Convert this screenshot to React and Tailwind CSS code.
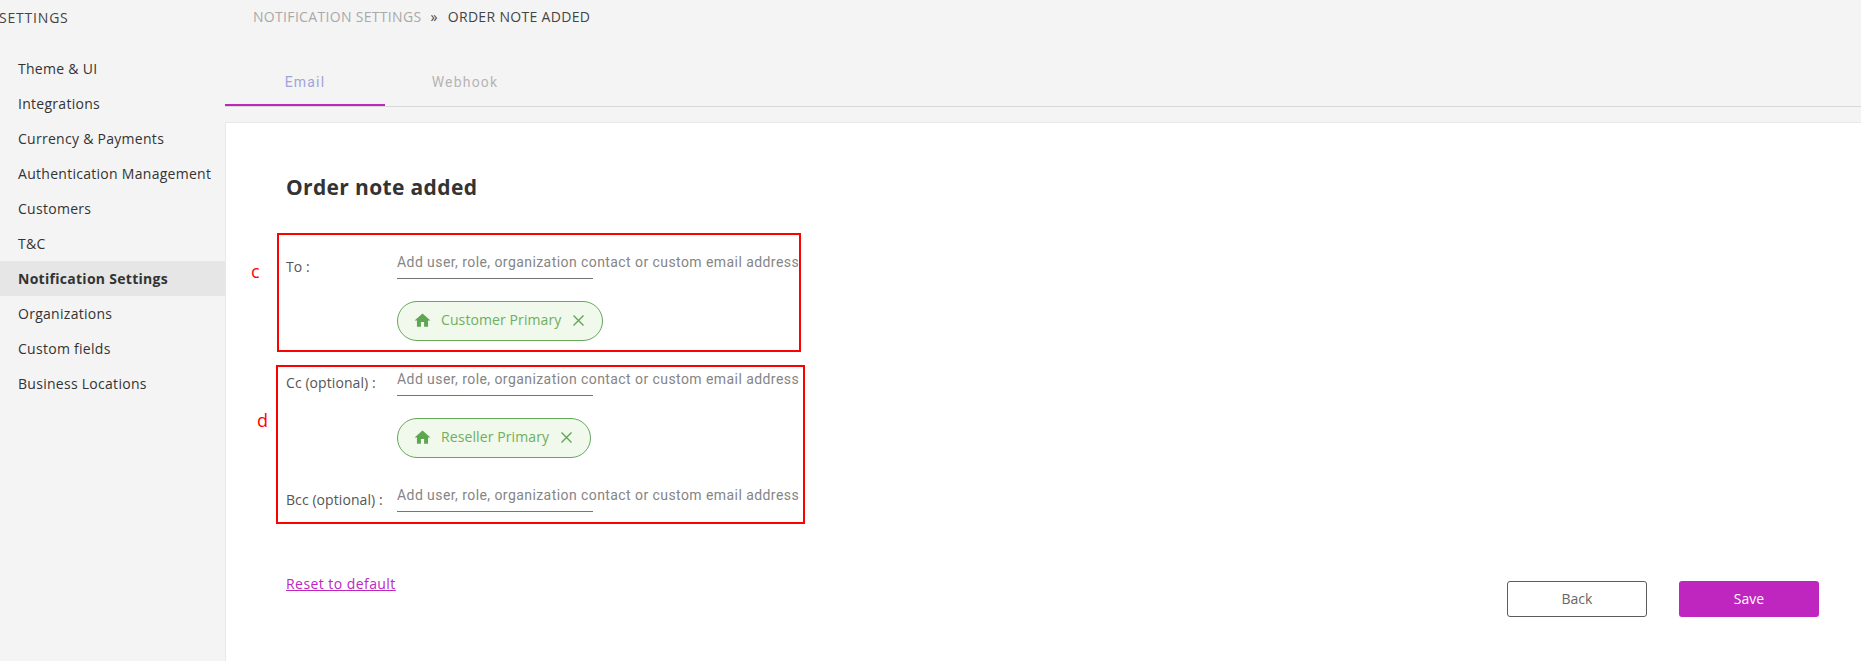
import React from "react";
import { MdHome } from "react-icons/md";

const nav = ["Theme & UI","Integrations","Currency & Payments","Authentication Management","Customers","T&C","Notification Settings","Organizations","Custom fields","Business Locations"];
const sans = "font-['Open_Sans','Noto_Sans',sans-serif]";

function Chip({ label }) {
  return (
    <div className={`mt-[22px] ml-[111px] flex h-10 w-fit items-center rounded-[20px] border border-[#66a85a] bg-[#f1f8ec] pr-[17px] pb-[2px] pl-[15px] text-[14px] text-[#6cb060] ${sans}`}>
      <MdHome className="h-[19px] w-[19px] text-[#5fa653]" />
      <span className="ml-[9px] -translate-y-[1px] whitespace-nowrap tracking-[0.1px]">{label}</span>
      <svg className="ml-[11px] h-[13px] w-[13px] text-[#5fa653]" viewBox="0 0 13 13" fill="none" stroke="currentColor" strokeWidth="1.4"><path d="M1.5 1.5l10 10M11.5 1.5l-10 10" /></svg>
    </div>
  );
}

function Field({ label, mt = "mt-0", pt = "pt-[8px]" }) {
  return (
    <div className={`flex ${mt}`}>
      <div className={`w-[111px] shrink-0 ${pt} text-[14px] leading-[20px] tracking-[0.08px] text-[#555] ${sans}`}>{label}</div>
      <div className="h-[30px] w-[196px] border-b border-[#757575]">
        <span className="block whitespace-nowrap font-['Roboto',sans-serif] text-[14px] leading-[26px] tracking-[0.43px] text-[#858585]">Add user, role, organization contact or custom email address</span>
      </div>
    </div>
  );
}

export default function App() {
  return (
    <div className={`relative flex h-[661px] w-full overflow-hidden bg-[#f4f4f4] ${sans}`}>
      <aside className="w-[225px] shrink-0">
        <div className="-ml-px h-[51px] pt-[8px] text-[14px] leading-[20px] tracking-[0.8px] text-[#444]">SETTINGS</div>
        {nav.map((n) => (
          <div key={n} className={`flex h-[35px] items-center pl-[18px] text-[14px] tracking-[0.28px] text-[#333] ${n === "Notification Settings" ? "bg-[#e6e6e6] font-bold text-[#222]" : ""}`}>{n}</div>
        ))}
      </aside>
      <main className="flex min-w-0 flex-1 flex-col">
        <div className="flex h-[33px] items-center pl-[28px] text-[14px] tracking-[0.32px] text-[#a9a9a9]">
          <span>NOTIFICATION SETTINGS</span>
          <span className="ml-[9px] text-[#444]">»</span>
          <span className="ml-[10px] text-[#444]">ORDER NOTE ADDED</span>
        </div>
        <div className="mt-[26px] flex h-[48px] border-b border-[#d9d9d9] font-['Roboto',sans-serif] text-[14px] tracking-[1.2px]">
          <div className="flex w-[160px] items-center justify-center border-b-2 border-[#bf26bf] pt-[2px] text-[#9fa3d9]">Email</div>
          <div className="flex w-[160px] items-center justify-center text-[#b5b5b5]">Webhook</div>
        </div>
        <div className="mt-[15px] flex-1 border-t border-l border-[#e8e8e8] bg-white pt-[50px] pl-[60px]">
          <h1 className="text-[21px] leading-[28px] font-bold tracking-[0.35px] text-[#333]">Order note added</h1>
          <div className="mt-[48px]">
            <Field label="To :" />
            <Chip label="Customer Primary" />
            <Field label="Cc (optional) :" mt="mt-[25px]" pt="pt-[7px]" />
            <Chip label="Reseller Primary" />
            <Field label="Bcc (optional) :" mt="mt-[24px]" />
          </div>
          <div className="mt-[62px] flex items-start justify-between pr-[42px]">
            <a className="text-[14px] leading-[20px] tracking-[0.44px] text-[#bf26bf] underline">Reset to default</a>
            <div className="mt-[7px] flex gap-[32px] text-[14px]">
              <button className="h-[36px] w-[140px] rounded-[3px] border border-[#5c5c5c] bg-white pb-[2px] text-[#666]">Back</button>
              <button className="h-[36px] w-[140px] rounded-[3px] bg-[#bf26bf] pb-[2px] text-white">Save</button>
            </div>
          </div>
        </div>
      </main>
      <div className="absolute top-[233px] left-[277px] h-[119px] w-[524px] border-2 border-[#ff0000]" />
      <div className="absolute top-[365px] left-[276px] h-[159px] w-[529px] border-2 border-[#ff0000]" />
      <span className="absolute top-[259px] left-[251px] text-[18px] leading-[24px] font-medium text-[#ff0000]">c</span>
      <span className="absolute top-[408px] left-[257px] text-[18px] leading-[24px] font-medium text-[#ff0000]">d</span>
    </div>
  );
}
